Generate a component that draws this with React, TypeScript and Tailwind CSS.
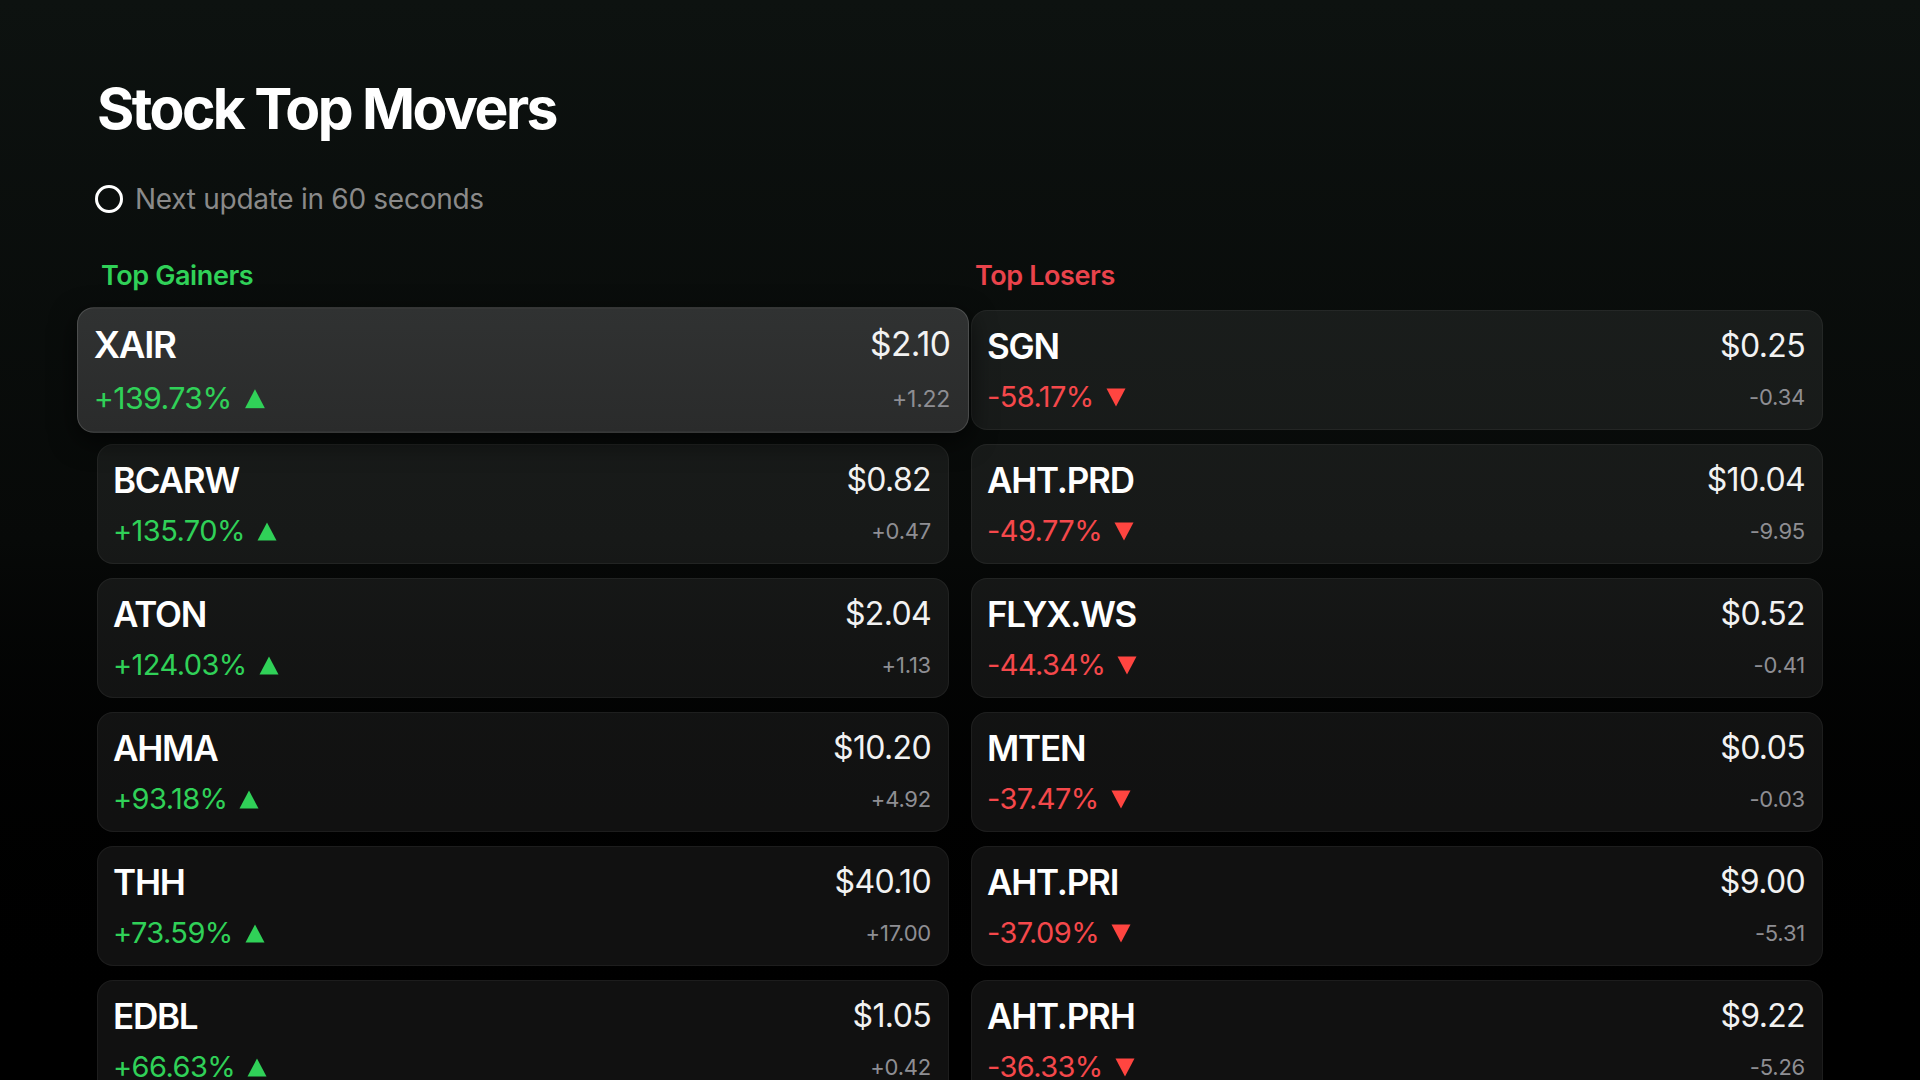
import React from "react";

type Mover = { sym: string; price: string; pct: string; chg: string };

const gainers: Mover[] = [
  { sym: "XAIR", price: "$2.10", pct: "+139.73%", chg: "+1.22" },
  { sym: "BCARW", price: "$0.82", pct: "+135.70%", chg: "+0.47" },
  { sym: "ATON", price: "$2.04", pct: "+124.03%", chg: "+1.13" },
  { sym: "AHMA", price: "$10.20", pct: "+93.18%", chg: "+4.92" },
  { sym: "THH", price: "$40.10", pct: "+73.59%", chg: "+17.00" },
  { sym: "EDBL", price: "$1.05", pct: "+66.63%", chg: "+0.42" },
];

const losers: Mover[] = [
  { sym: "SGN", price: "$0.25", pct: "-58.17%", chg: "-0.34" },
  { sym: "AHT.PRD", price: "$10.04", pct: "-49.77%", chg: "-9.95" },
  { sym: "FLYX.WS", price: "$0.52", pct: "-44.34%", chg: "-0.41" },
  { sym: "MTEN", price: "$0.05", pct: "-37.47%", chg: "-0.03" },
  { sym: "AHT.PRI", price: "$9.00", pct: "-37.09%", chg: "-5.31" },
  { sym: "AHT.PRH", price: "$9.22", pct: "-36.33%", chg: "-5.26" },
];

function Triangle({ up }: { up: boolean }) {
  return (
    <svg width="20" height="19" viewBox="0 0 20 19" className="shrink-0">
      {up ? (
        <path d="M10 0.5 L19.5 18.5 L0.5 18.5 Z" fill="#30d158" />
      ) : (
        <path d="M0.5 0.5 L19.5 0.5 L10 18.5 Z" fill="#ff4540" />
      )}
    </svg>
  );
}

function Card({ m, up, focused }: { m: Mover; up: boolean; focused?: boolean }) {
  return (
    <div
      className={
        focused
          ? "relative z-10 flex h-[120px] scale-[1.047] flex-col justify-between rounded-[16px] border border-white/[0.14] bg-gradient-to-b from-[#303232] to-[#2a2b2b] py-[15px] pl-[15px] pr-[17px] shadow-[0_8px_24px_rgba(0,0,0,0.6)]"
          : "flex h-[120px] flex-col justify-between rounded-[16px] border border-white/[0.05] bg-white/[0.065] py-[15px] pl-[15px] pr-[17px]"
      }
    >
      <div className="flex items-center justify-between">
        <span className="text-[35px] font-semibold leading-[40px] tracking-[-0.035em] text-white">
          {m.sym}
        </span>
        <span className="text-[32px] font-normal leading-[40px] tracking-[-0.02em] text-[#f2f2f2]">
          {m.price}
        </span>
      </div>
      <div className="flex items-center justify-between">
        <span className="flex items-center gap-[12px]">
          <span
            className={
              up
                ? "text-[29px] leading-[34px] tracking-[-0.02em] text-[#30d158]"
                : "text-[29px] leading-[34px] tracking-[-0.02em] text-[#f5484b]"
            }
          >
            {m.pct}
          </span>
          <Triangle up={up} />
        </span>
        <span className="text-[22px] leading-[34px] tracking-[-0.01em] text-[#8e8e93]">
          {m.chg}
        </span>
      </div>
    </div>
  );
}

export default function App() {
  return (
    <div
      className="h-[1080px] w-full overflow-hidden bg-gradient-to-b from-[#0d1210] via-[#070908] to-[#000000]"
      style={{ fontFamily: "Inter, 'Noto Sans', sans-serif" }}
    >
      <div className="px-[97px] pt-[80px]">
        <h1 className="text-[57px] font-bold leading-none tracking-[-0.045em] text-white">
          Stock Top Movers
        </h1>
        <div className="mt-[45px] flex h-[34px] items-center gap-[12px]">
          <span className="-ml-[2px] h-[28px] w-[28px] shrink-0 rounded-full border-[3.5px] border-white" />
          <span className="text-[28px] leading-[34px] tracking-[-0.01em] text-[#8a8a8a]">
            Next update in 60 seconds
          </span>
        </div>
        <div className="mt-[44px] grid grid-cols-2 gap-x-[22px]">
          <div>
            <h2 className="pl-[4px] text-[27px] font-semibold leading-[32px] tracking-[-0.015em] text-[#30d158]">
              Top Gainers
            </h2>
            <div className="mt-[18px] flex flex-col gap-[14px]">
              {gainers.map((m, i) => (
                <Card key={m.sym} m={m} up focused={i === 0} />
              ))}
            </div>
          </div>
          <div>
            <h2 className="pl-[4px] text-[27px] font-semibold leading-[32px] tracking-[-0.015em] text-[#ea434b]">
              Top Losers
            </h2>
            <div className="mt-[18px] flex flex-col gap-[14px]">
              {losers.map((m) => (
                <Card key={m.sym} m={m} up={false} />
              ))}
            </div>
          </div>
        </div>
      </div>
    </div>
  );
}
